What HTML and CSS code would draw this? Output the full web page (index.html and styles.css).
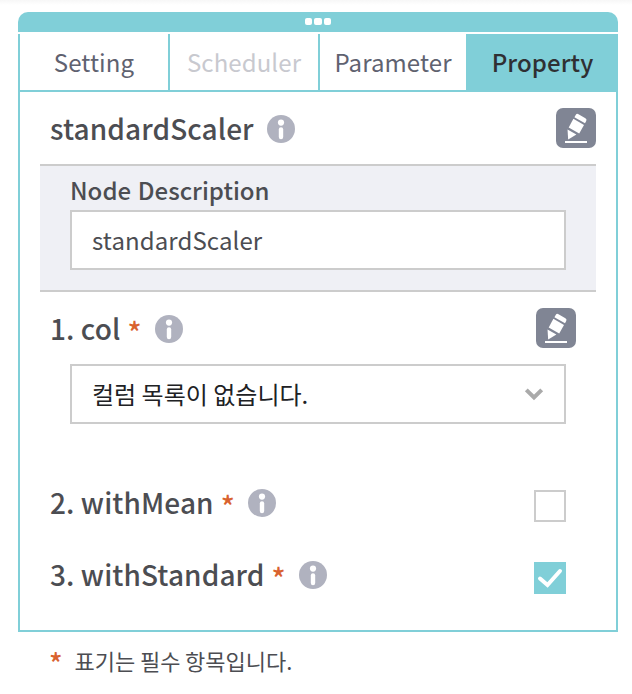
FILE: index.html
```
<!DOCTYPE html>
<html lang="ko">
<head>
<meta charset="utf-8">
<title>Property</title>
<link rel="stylesheet" href="styles.css">
</head>
<body>
<svg class="defs" width="0" height="0" aria-hidden="true">
  <symbol id="info" viewBox="0 0 28 28">
    <circle cx="14" cy="14" r="14" fill="#b0b2bf"/>
    <circle cx="14" cy="7.6" r="3.1" fill="#fff"/>
    <rect x="11.8" y="12.3" width="4.4" height="12" rx="2.2" fill="#fff"/>
  </symbol>
  <symbol id="edit" viewBox="0 0 40 40">
    <rect width="40" height="40" rx="7" fill="#808594"/>
    <g fill="#fff">
      <path d="M11.5 21.5 20.4 26.6 12.2 31.4z"/>
      <path d="M17.4 10.8 28 16.9 23.2 25.5 12.7 19.5z"/>
      <path d="M18.4 9.3 19.7 7Q20.7 5.2 22.5 6.2L29.4 10.2Q31.2 11.2 30.2 13L29 15.3z"/>
    </g>
    <path d="M9 34H31" stroke="#fff" stroke-width="2"/>
  </symbol>
</svg>
<main class="panel">
  <div class="grip"><i></i><i></i><i></i></div>
  <nav class="tabs">
    <div class="tab">Setting</div>
    <div class="tab disabled">Scheduler</div>
    <div class="tab">Parameter</div>
    <div class="tab active">Property</div>
  </nav>
  <div class="body">
    <div class="row title">
      <span class="name">standardScaler</span>
      <svg class="info"><use href="#info"/></svg>
      <svg class="edit"><use href="#edit"/></svg>
    </div>
    <section class="description">
      <div class="label">Node Description</div>
      <div class="field">standardScaler</div>
    </section>
    <div class="row column">
      <span class="name">1. col</span><span class="star">*</span>
      <svg class="info"><use href="#info"/></svg>
      <svg class="edit"><use href="#edit"/></svg>
    </div>
    <div class="field select"><span>컬럼 목록이 없습니다.</span>
      <svg class="chevron" viewBox="0 0 20 14"><path d="M2.3 2.8 10 10.5 17.7 2.8" fill="none" stroke="#aaa" stroke-width="4"/></svg>
    </div>
    <div class="row option mean">
      <span class="name">2. withMean</span><span class="star">*</span>
      <svg class="info"><use href="#info"/></svg>
      <div class="check"></div>
    </div>
    <div class="row option standard">
      <span class="name">3. withStandard</span><span class="star">*</span>
      <svg class="info"><use href="#info"/></svg>
      <div class="check checked"><svg viewBox="0 0 32 32"><path d="M6 16.5 13.5 23 26 9" fill="none" stroke="#fff" stroke-width="4" stroke-linecap="round"/></svg></div>
    </div>
  </div>
</main>
<footer class="note"><span class="star">*</span><span>표기는 필수 항목입니다.</span></footer>
</body>
</html>
```
FILE: styles.css
```
* { box-sizing: border-box; }
body {
  margin: 0;
  padding-top: 12px;
  height: 694px;
  overflow: hidden;
  background: linear-gradient(#f7f7f7, #fff 5px);
  color: #4c4d52;
  font-family: "Noto Sans CJK KR", sans-serif;
}
svg { display: block; flex: none; }
.defs { position: absolute; }
.panel { width: 600px; margin-left: 18px; }
.grip {
  height: 20px;
  display: flex;
  justify-content: center;
  gap: 2px;
  padding: 6px 0 0 0;
  background: #80cfd8;
  border-radius: 10px 10px 0 0;
}
.grip i { width: 7.4px; height: 7.4px; border-radius: 2px; background: #fff; }
.tabs {
  display: grid;
  grid-template-columns: 150px 150px 148px 152px;
  height: 60px;
  border-top: 2px solid #fff;
  border-bottom: 2px solid #80cfd8;
}
.tab {
  display: flex;
  align-items: center;
  justify-content: center;
  border-left: 2px solid #80cfd8;
  font-size: 24px;
  line-height: 36px;
  letter-spacing: .1px;
  color: #5f6270;
}
.tab.disabled { color: #c8c9cf; }
.tab.active { padding-right: 1px; background: #80cfd8; color: #2f3033; font-weight: 500; }
.body {
  height: 540px;
  padding: 0 20px;
  border: 2px solid #80cfd8;
  border-top: 0;
}
.row { display: flex; align-items: center; padding-left: 10px; }
.name {
  font-size: 28px;
  line-height: 40px;
  font-weight: 500;
  letter-spacing: .1px;
  word-spacing: -1.6px;
}
.star { color: #d9622f; font-weight: 500; }
.row .star { font-size: 29px; line-height: 40px; margin: 6px 0 0 7px; }
.info { width: 28px; height: 28px; margin: 0 0 0 13px; }
.edit { width: 40px; height: 40px; margin-left: auto; }
.title { height: 72px; }
.title .info { margin-top: 1px; }
.description {
  height: 128px;
  padding: 5px 30px 0;
  background: #eff0f5;
  border-top: 2px solid #ccc;
  border-bottom: 2px solid #ccc;
}
.label { height: 39px; font-size: 24px; line-height: 38px; font-weight: 500; }
.field {
  display: flex;
  align-items: center;
  height: 60px;
  padding: 0 20px;
  background: #fff;
  border: 2px solid #ccc;
  font-size: 24px;
  line-height: 38px;
  letter-spacing: .1px;
}
.column { height: 72px; padding-right: 20px; }
.column .info { margin-top: 1px; }
.select { margin: 0 30px; color: #202124; letter-spacing: 0; word-spacing: -1.3px; }
.chevron { width: 20px; height: 14px; margin-left: auto; }
.option { height: 32px; padding-right: 30px; }
.option .name { margin-bottom: 8px; }
.option .star { margin-top: -2px; }
.option .info { margin-top: -7px; }
.mean { margin-top: 66px; }
.standard { margin-top: 40px; }
.check { width: 32px; height: 32px; margin-left: auto; border: 2px solid #ccc; }
.check.checked { border: 0; background: #80cfd8; }
.note {
  display: flex;
  align-items: center;
  height: 56px;
  padding-left: 49px;
  font-size: 22px;
  word-spacing: -1.5px;
}
.note .star { margin: 4px 12px 0 0; font-size: 28px; line-height: 36px; }
```
